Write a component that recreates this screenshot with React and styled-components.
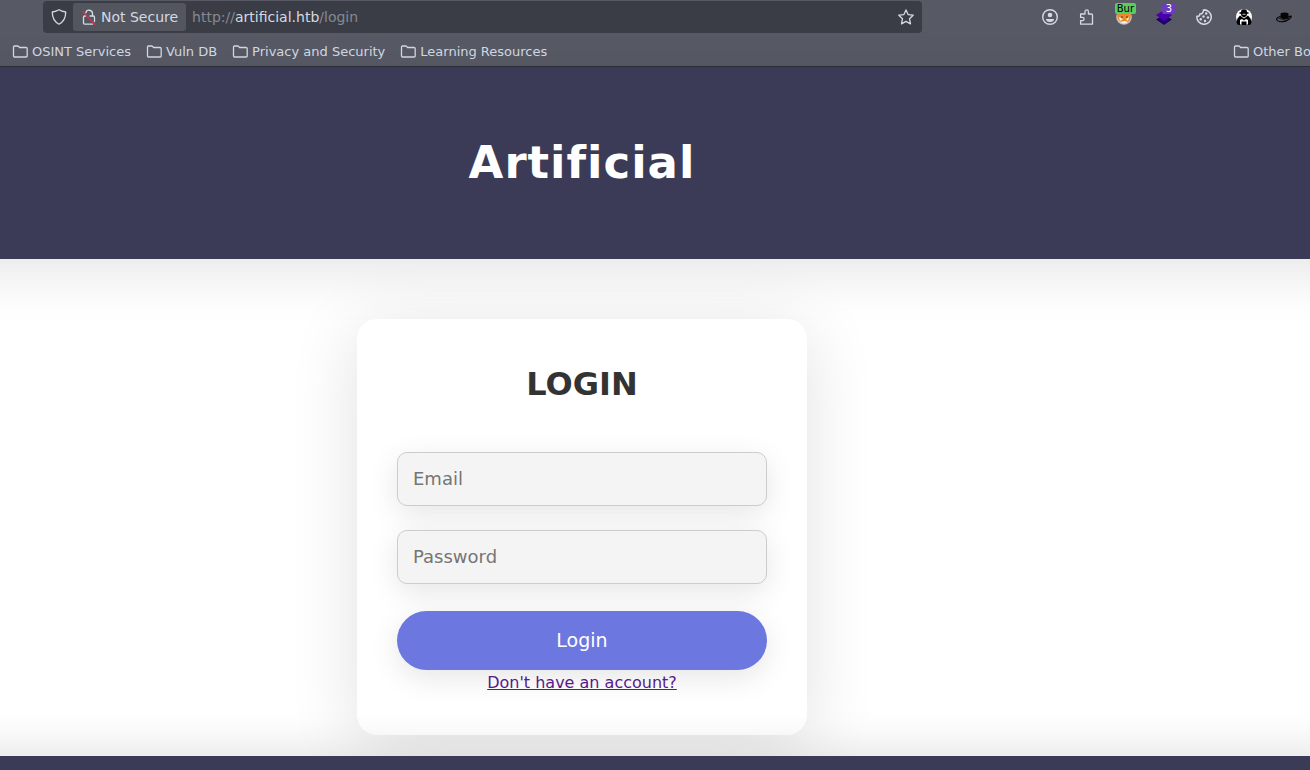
import React from "react";
import styled, { createGlobalStyle } from "styled-components";

const GlobalStyle = createGlobalStyle`
  *, *::before, *::after { box-sizing: border-box; }
  body {
    margin: 0;
    background: #fff;
    font-family: "DejaVu Sans", sans-serif;
    color: #333;
  }
  button, input { font-family: inherit; }
  svg { flex: none; }
`;

const Page = styled.div`
  display: flex;
  flex-direction: column;
  height: 100vh;
  overflow: hidden;
`;

/* Browser chrome */
const Chrome = styled.div`
  flex: none;
  background: #575965;
  border-bottom: 1px solid #2d2e3a;
  color: #d3dae3;
`;

const Toolbar = styled.div`
  display: flex;
  align-items: center;
  height: 34px;
  padding: 0 6px 0 43px;
`;

const UrlBar = styled.div`
  flex: 1;
  display: flex;
  align-items: center;
  height: 32px;
  margin-right: 110px;
  padding: 0 8px;
  border-radius: 4px;
  background: #3b3d46;
`;

const SecurityChip = styled.button`
  display: flex;
  align-items: center;
  gap: 4px;
  height: 28px;
  margin: 0 6px;
  padding: 0 8px;
  border: 0;
  border-radius: 3px;
  background: #54565f;
  color: #d3dae3;
  font-size: 14px;
  white-space: nowrap;
`;

const Address = styled.a`
  flex: 1;
  color: #858992;
  font-size: 14px;
  text-decoration: none;
`;

const Domain = styled.span`
  color: #d3dae3;
`;

const IconButton = styled.button`
  position: relative;
  flex: none;
  display: flex;
  align-items: center;
  justify-content: center;
  width: ${(p) => p.$width}px;
  height: 32px;
  padding: 0;
  border: 0;
  background: none;
  color: #d3dae3;
`;

const Badge = styled.span`
  position: absolute;
  top: 2px;
  right: ${(p) => p.$right}px;
  padding: 0 ${(p) => p.$pad}px;
  border-radius: 2px;
  background: ${(p) => p.$bg};
  color: ${(p) => p.$color};
  font-size: 10px;
  line-height: 11px;
`;

const Bookmarks = styled.nav`
  display: flex;
  align-items: center;
  gap: 15px;
  height: 32px;
  padding: 2px 0 0 12px;
`;

const Bookmark = styled.a`
  display: flex;
  align-items: center;
  gap: 4px;
  color: #d3dae3;
  font-size: 13px;
  text-decoration: none;
  white-space: nowrap;
`;

const OtherBookmarks = styled.div`
  width: 77px;
  margin-left: auto;
  overflow: hidden;
`;

/* Site: header and footer bleed past both window edges so their shadows stay even */
const Header = styled.header`
  flex: none;
  display: flex;
  align-items: center;
  justify-content: center;
  height: 192px;
  margin: 0 -80px;
  padding: 0 226px 0 80px;
  background: #3c3b57;
  box-shadow: 0 15px 50px rgba(0, 0, 0, 0.1);
`;

const Title = styled.h1`
  margin: 0;
  color: #fff;
  font-size: 45px;
  line-height: 56px;
  letter-spacing: 1px;
`;

const Main = styled.main`
  flex: none;
  display: flex;
  justify-content: center;
  padding: 60px 146px 21px 0;
`;

const Card = styled.form`
  display: flex;
  flex-direction: column;
  width: 450px;
  padding: 40px;
  border-radius: 20px;
  background: #fff;
  box-shadow: 0 10px 70px rgba(0, 0, 0, 0.12);
`;

const Heading = styled.h2`
  margin: 0 0 43px;
  color: #333;
  font-size: 32px;
  line-height: 50px;
  text-align: center;
  text-transform: uppercase;
`;

const Field = styled.input`
  height: 54px;
  margin-bottom: 24px;
  padding: 0 15px 2px;
  border: 1px solid #ccc;
  border-radius: 10px;
  background: #f4f4f4;
  box-shadow: 0 8px 30px rgba(0, 0, 0, 0.1);
  font-size: 18px;
  &::placeholder { color: #757575; opacity: 1; }
`;

const Submit = styled.button`
  height: 59px;
  margin-top: 3px;
  padding: 0 0 2px;
  border: 0;
  border-radius: 30px;
  background: #6c78df;
  box-shadow: 0 8px 30px rgba(0, 0, 0, 0.1);
  color: #fff;
  font-size: 19px;
`;

const Register = styled.a`
  align-self: center;
  color: #551a8b;
  font-size: 16px;
  line-height: 25px;
`;

const Footer = styled.footer`
  position: relative;
  flex: 1 0 100px;
  margin: 0 -80px;
  background: #3c3b57;
  box-shadow: 0 -10px 40px rgba(0, 0, 0, 0.1);
`;

const Icon = ({ size = 16, children, ...rest }) => (
  <svg width={size} height={size} viewBox="0 0 16 16" fill="none" stroke="currentColor"
    strokeWidth="1.3" strokeLinecap="round" strokeLinejoin="round" aria-hidden="true" {...rest}>
    {children}
  </svg>
);

const FolderIcon = () => (
  <Icon>
    <path d="M1.500 13v-9q0-1 1-1h3.200q.6 0 1 .5l.9 1h6.400q1.200 0 1.200 1.200v7.300q0 1-1 1H2.500q-1 0-1-1z" />
  </Icon>
);

const ShieldIcon = () => (
  <Icon>
    <path d="M8 .8C6 2 4 2.600 1.300 3c-.1 5.500 1.700 9.500 6.700 12.200C13 12.500 14.800 8.500 14.700 3 12 2.600 10 2 8 .8z" />
  </Icon>
);

const InsecureIcon = () => (
  <Icon>
    <path d="M4.800 3.800A3.400 3.400 0 0 1 11.500 4.500V7" />
    <path d="M9 7h3.300q1.200 0 1.200 1.200v4.300M11.500 15.200H3.700q-1.200 0-1.200-1.200V8.200Q2.500 7 3.700 7h.8V6.500" />
    <path d="M1.500 2.500 14 15.500" stroke="#e22850" strokeWidth="1.200" />
  </Icon>
);

const StarIcon = () => (
  <Icon>
    <path d="m8 .9 2.100 4.700 5.100.6-3.700 3.500 1 5.200L8 12.400l-4.500 2.500 1-5.200L.8 6.200l5.100-.6z" />
  </Icon>
);

const AccountIcon = () => (
  <Icon>
    <circle cx="8" cy="8" r="7.300" strokeWidth="1.400" />
    <circle cx="8" cy="6" r="2.300" fill="currentColor" stroke="none" />
    <path d="M4 10h8q0 3-4 3t-4-3z" fill="currentColor" stroke="none" />
  </Icon>
);

const PuzzleIcon = () => (
  <Icon>
    <path d="M2.600 5H7V2.600a1.700 1.700 0 0 1 3.400 0V5h3q1.100 0 1.100 1.100v9.100H2.600v-3.600h1.900a1.600 1.600 0 0 0 0-3.200H2.600z" />
  </Icon>
);

const FoxIcon = () => (
  <Icon stroke="none">
    <circle cx="8" cy="8" r="7.800" fill="#c9bfb6" />
    <path d="M1 5h14l-1 6-3 3-2-2-4 1-3-3z" fill="#e98a2d" />
    <path d="m3 8 4 2-3 2zM13 8l-3 2 2 2z" fill="#fff0da" />
    <path d="M5 7.500h2v1H5zM10 7.500h2v1h-2z" fill="#593019" />
    <path d="M4 13q4 3 8 0l-3-1z" fill="#f5f2ef" />
  </Icon>
);

const LayersIcon = () => (
  <Icon stroke="none">
    <path d="m8 5.500 8 5-8 5.500-8-5.500z" fill="#22006d" />
    <path d="m8 1 8 5-8 6-8-6z" fill="#4900ad" />
  </Icon>
);

const CookieIcon = () => (
  <Icon>
    <path d="M7.500.9A7.200 7.200 0 1 1 .9 7.300c2 .2 3-.6 2.900-2.300C6 5.300 7.500 3.500 7.500.9z" strokeWidth="1.500" />
    <g fill="currentColor" stroke="none">
      <circle cx="10.200" cy="4.500" r="1.200" />
      <circle cx="7.500" cy="7.500" r="1.200" />
      <circle cx="12" cy="8.500" r="1.200" />
      <circle cx="4.800" cy="10.300" r="1.200" />
      <circle cx="9" cy="12" r="1.200" />
    </g>
  </Icon>
);

const AgentIcon = () => (
  <Icon stroke="none">
    <circle cx="8" cy="8" r="8" fill="#fff" />
    <path d="M5 3 5.500.8Q8-.3 10.500.8L11 3l2.500 1-2.500 1-.5 2L8 8.500 5.500 7 5 5 2.500 4z" fill="#000" />
    <path d="m4 6.500 4 3 4-3 2.500 3 1 4-1.500 2.500h-2V11l-2-1-2 1.500L6 10l-2 1v5H2L.5 13.500l1-4z" fill="#000" />
    <path d="M5.500 12.500h5V16h-5z" fill="#000" />
    <path d="M6.500 4.800h3v.8h-3z" fill="#fff" />
  </Icon>
);

const HatIcon = () => (
  <Icon stroke="none">
    <path d="M4.300 9 4.700 4.200q3.800-1.200 7.700 0L12.700 9q-4 2-8.400 0z" fill="#050505" />
    <path d="M4 7.500Q.6 8.500.6 10.300q.2 2.300 5 2.400 5-.2 7.700-2.700 2-1.500 2.100-3l-2.600.6" stroke="#050505" strokeWidth="1.100" />
    <path d="M3 9.700q5 2 10-.7" stroke="#050505" strokeWidth=".8" />
  </Icon>
);

const folders = ["OSINT Services", "Vuln DB", "Privacy and Security", "Learning Resources"];

const BrowserChrome = () => (
  <Chrome>
    <Toolbar>
      <UrlBar>
        <ShieldIcon />
        <SecurityChip type="button"><InsecureIcon />Not Secure</SecurityChip>
        <Address href="#login">http://<Domain>artificial.htb</Domain>/login</Address>
        <StarIcon />
      </UrlBar>
      <IconButton type="button" $width={36} aria-label="Account"><AccountIcon /></IconButton>
      <IconButton type="button" $width={36} aria-label="Extensions"><PuzzleIcon /></IconButton>
      <IconButton type="button" $width={40} aria-label="Proxy">
        <FoxIcon />
        <Badge $right={8} $pad={2} $bg="#5bcb62" $color="#000">Bur</Badge>
      </IconButton>
      <IconButton type="button" $width={40} aria-label="Technologies">
        <LayersIcon />
        <Badge $right={8} $pad={4} $bg="#6c3cbb" $color="#fff">3</Badge>
      </IconButton>
      <IconButton type="button" $width={40} aria-label="Cookies"><CookieIcon /></IconButton>
      <IconButton type="button" $width={40} aria-label="User agent"><AgentIcon /></IconButton>
      <IconButton type="button" $width={40} aria-label="Hack tools"><HatIcon /></IconButton>
    </Toolbar>
    <Bookmarks>
      {folders.map((name) => (
        <Bookmark key={name} href="#"><FolderIcon />{name}</Bookmark>
      ))}
      <OtherBookmarks>
        <Bookmark href="#"><FolderIcon />Other Bookmarks</Bookmark>
      </OtherBookmarks>
    </Bookmarks>
  </Chrome>
);

export default function App() {
  return (
    <>
      <GlobalStyle />
      <Page>
        <BrowserChrome />
        <Header><Title>Artificial</Title></Header>
        <Main>
          <Card onSubmit={(e) => e.preventDefault()}>
            <Heading>Login</Heading>
            <Field type="email" placeholder="Email" aria-label="Email" />
            <Field type="password" placeholder="Password" aria-label="Password" />
            <Submit type="submit">Login</Submit>
            <Register href="#register">Don't have an account?</Register>
          </Card>
        </Main>
        <Footer />
      </Page>
    </>
  );
}
